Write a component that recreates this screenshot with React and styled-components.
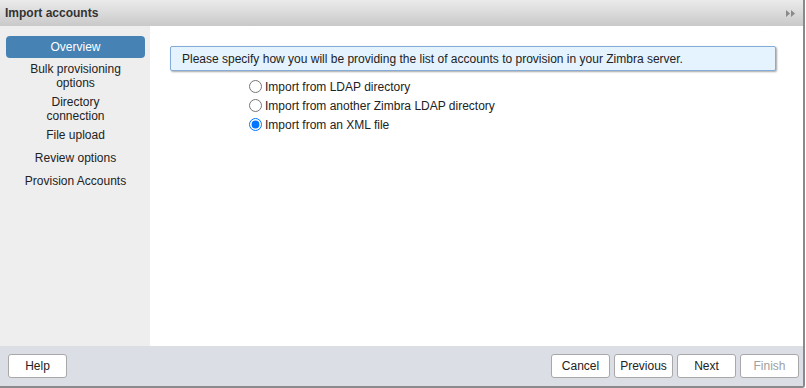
import React, { useState } from 'react';
import styled, { createGlobalStyle } from 'styled-components';

const GlobalStyle = createGlobalStyle`
  html, body {
    margin: 0;
    padding: 0;
    background: #ffffff;
    font-family: "Liberation Sans", Arial, sans-serif;
  }
`;

const Dialog = styled.div`
  width: 803px;
  height: 386px;
  display: flex;
  flex-direction: column;
  border-right: 2px solid #8a8a8a;
  border-bottom: 2px solid #8a8a8a;
  border-bottom-right-radius: 3px;
  overflow: hidden;
  box-sizing: content-box;
`;

const TitleBar = styled.div`
  height: 26px;
  flex: none;
  display: flex;
  align-items: center;
  justify-content: space-between;
  padding: 0 8px 0 5px;
  background: linear-gradient(#ebebeb, #c9c9c9);
  font-size: 12px;
  font-weight: bold;
  color: #333;
`;

const Collapse = styled.span`
  display: flex;
  gap: 1px;
`;

const Body = styled.div`
  flex: 1;
  display: flex;
  min-height: 0;
`;

const Sidebar = styled.div`
  width: 150px;
  flex: none;
  background: #eeeeee;
  padding-top: 10px;
  display: flex;
  flex-direction: column;
  align-items: stretch;
`;

const NavItem = styled.div`
  margin: 0 5px 0 6px;
  padding: ${({ $active }) => ($active ? '4px 0 4px' : '2px 0')};
  margin-bottom: ${({ $gap }) => $gap}px;
  text-align: center;
  font-size: 12px;
  line-height: 14px;
  color: ${({ $active }) => ($active ? '#ffffff' : '#222')};
  background: ${({ $active }) => ($active ? '#4682b4' : 'transparent')};
  border-radius: 4px;
`;

const Content = styled.div`
  flex: 1;
  background: #ffffff;
  padding: 20px 24px 0 20px;
`;

const InfoBox = styled.div`
  width: 606px;
  height: 25px;
  display: flex;
  align-items: center;
  padding-left: 11px;
  background: #e5f3ff;
  border: 1px solid #85acd8;
  border-radius: 2px;
  box-shadow: 1px 1px 2px rgba(0, 0, 0, 0.35);
  font-size: 12px;
  color: #222;
  box-sizing: border-box;
`;

const Options = styled.div`
  display: flex;
  flex-direction: column;
  padding: 8px 0 0 78px;
  gap: 4px;
`;

const Option = styled.label`
  display: flex;
  align-items: center;
  height: 15px;
  font-size: 12px;
  color: #222;
`;

const Radio = styled.input`
  width: 13px;
  height: 13px;
  margin: 0 3px 0 1px;
  accent-color: #0075ff;
`;

const Footer = styled.div`
  height: 40px;
  flex: none;
  background: #dbdee4;
  display: flex;
  align-items: center;
  justify-content: space-between;
  padding: 0 4px 0 8px;
`;

const ButtonGroup = styled.div`
  display: flex;
  gap: 4px;
`;

const Button = styled.button`
  width: 59px;
  height: 24px;
  padding: 0;
  background: #ffffff;
  border: 1px solid #a8a8a8;
  border-radius: 3px;
  font-family: "Liberation Sans", Arial, sans-serif;
  font-size: 12px;
  color: ${({ disabled }) => (disabled ? '#a0a0a0' : '#222')};
`;

const steps = [
  { label: ['Overview'], gap: 2 },
  { label: ['Bulk provisioning', 'options'], gap: 1 },
  { label: ['Directory', 'connection'], gap: 1 },
  { label: ['File upload'], gap: 5 },
  { label: ['Review options'], gap: 5 },
  { label: ['Provision Accounts'], gap: 0 },
];

const choices = [
  'Import from LDAP directory',
  'Import from another Zimbra LDAP directory',
  'Import from an XML file',
];

export default function App() {
  const [choice, setChoice] = useState(2);

  return (
    <>
      <GlobalStyle />
      <Dialog>
        <TitleBar>
          Import accounts
          <Collapse>
            <svg width="9" height="7" viewBox="0 0 9 7">
              <path d="M0 0 L4 3.5 L0 7 Z M5 0 L9 3.5 L5 7 Z" fill="#8a8a8a" />
            </svg>
          </Collapse>
        </TitleBar>
        <Body>
          <Sidebar>
            {steps.map((s, i) => (
              <NavItem key={i} $active={i === 0} $gap={s.gap}>
                {s.label.map((l) => (
                  <div key={l}>{l}</div>
                ))}
              </NavItem>
            ))}
          </Sidebar>
          <Content>
            <InfoBox>
              Please specify how you will be providing the list of accounts to provision in your Zimbra server.
            </InfoBox>
            <Options>
              {choices.map((c, i) => (
                <Option key={c}>
                  <Radio
                    type="radio"
                    name="src"
                    checked={choice === i}
                    onChange={() => setChoice(i)}
                  />
                  {c}
                </Option>
              ))}
            </Options>
          </Content>
        </Body>
        <Footer>
          <Button>Help</Button>
          <ButtonGroup>
            <Button>Cancel</Button>
            <Button>Previous</Button>
            <Button>Next</Button>
            <Button disabled>Finish</Button>
          </ButtonGroup>
        </Footer>
      </Dialog>
    </>
  );
}
